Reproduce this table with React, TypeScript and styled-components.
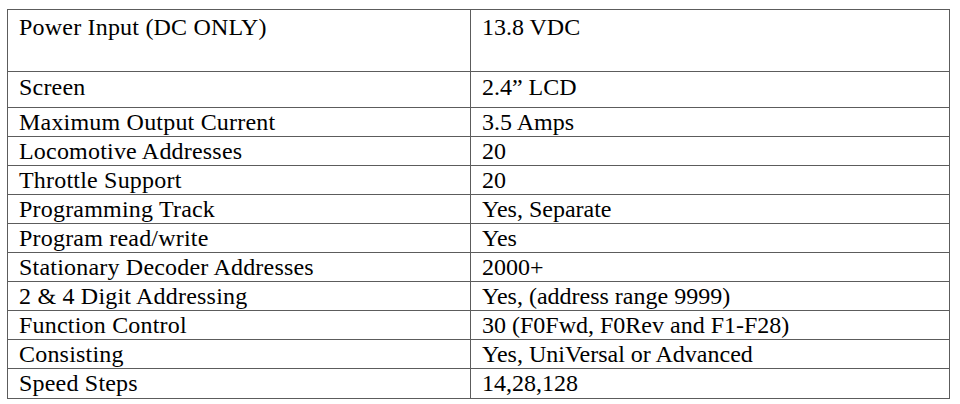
import * as React from 'react'
import styled, { createGlobalStyle } from 'styled-components'

interface SpecRow {
  id: string
  label: string
  value: string
  height: number
  padTop?: number
}

const GlobalStyle = createGlobalStyle`
  html, body {
    margin: 0;
    padding: 0;
    background: #ffffff;
  }
`

const Page = styled.div`
  width: 960px;
  height: 404px;
  box-sizing: border-box;
  padding: 9px 0 0 7px;
  background: #ffffff;
  overflow: hidden;
`

const Table = styled.table`
  border-collapse: collapse;
  table-layout: fixed;
  width: 943px;
  font-family: 'Liberation Serif', 'Times New Roman', serif;
  font-size: 24px;
  color: #000000;
`

const Row = styled.tr<{ h: number }>`
  height: ${p => p.h}px;
`

const Cell = styled.td<{ padTop: number; wide?: boolean }>`
  border: 1px solid #5c5c5c;
  padding: ${p => p.padTop}px 10px 0 11px;
  vertical-align: top;
  line-height: 27px;
  white-space: nowrap;
  width: ${p => (p.wide ? 478 : 462)}px;
  letter-spacing: ${p => (p.wide ? 0 : 0.2)}px;
  box-sizing: border-box;
`

const rows: SpecRow[] = [
  { id: 'power', label: 'Power Input (DC ONLY)', value: '13.8 VDC', height: 62, padTop: 4 },
  { id: 'screen', label: 'Screen', value: '2.4\u201D LCD', height: 36, padTop: 2 },
  { id: 'current', label: 'Maximum Output Current', value: '3.5 Amps', height: 29 },
  { id: 'loco', label: 'Locomotive Addresses', value: '20', height: 29 },
  { id: 'throttle', label: 'Throttle Support', value: '20', height: 29 },
  { id: 'prog', label: 'Programming Track', value: 'Yes, Separate', height: 28 },
  { id: 'rw', label: 'Program read/write', value: 'Yes', height: 29 },
  { id: 'stationary', label: 'Stationary Decoder Addresses', value: '2000+', height: 29 },
  { id: 'digit', label: '2 & 4 Digit Addressing', value: 'Yes, (address range 9999)', height: 29 },
  { id: 'function', label: 'Function Control', value: '30 (F0Fwd, F0Rev and F1-F28)', height: 29 },
  { id: 'consist', label: 'Consisting', value: 'Yes, UniVersal or Advanced', height: 28 },
  { id: 'speed', label: 'Speed Steps', value: '14,28,128', height: 30 },
]

const App: React.FC = () => (
  <>
    <GlobalStyle />
    <Page>
      <Table>
        <tbody>
          {rows.map(r => (
            <Row key={r.id} h={r.height}>
              <Cell padTop={r.padTop ?? 1}>{r.label}</Cell>
              <Cell padTop={r.padTop ?? 1} wide>
                {r.value}
              </Cell>
            </Row>
          ))}
        </tbody>
      </Table>
    </Page>
  </>
)

export default App
